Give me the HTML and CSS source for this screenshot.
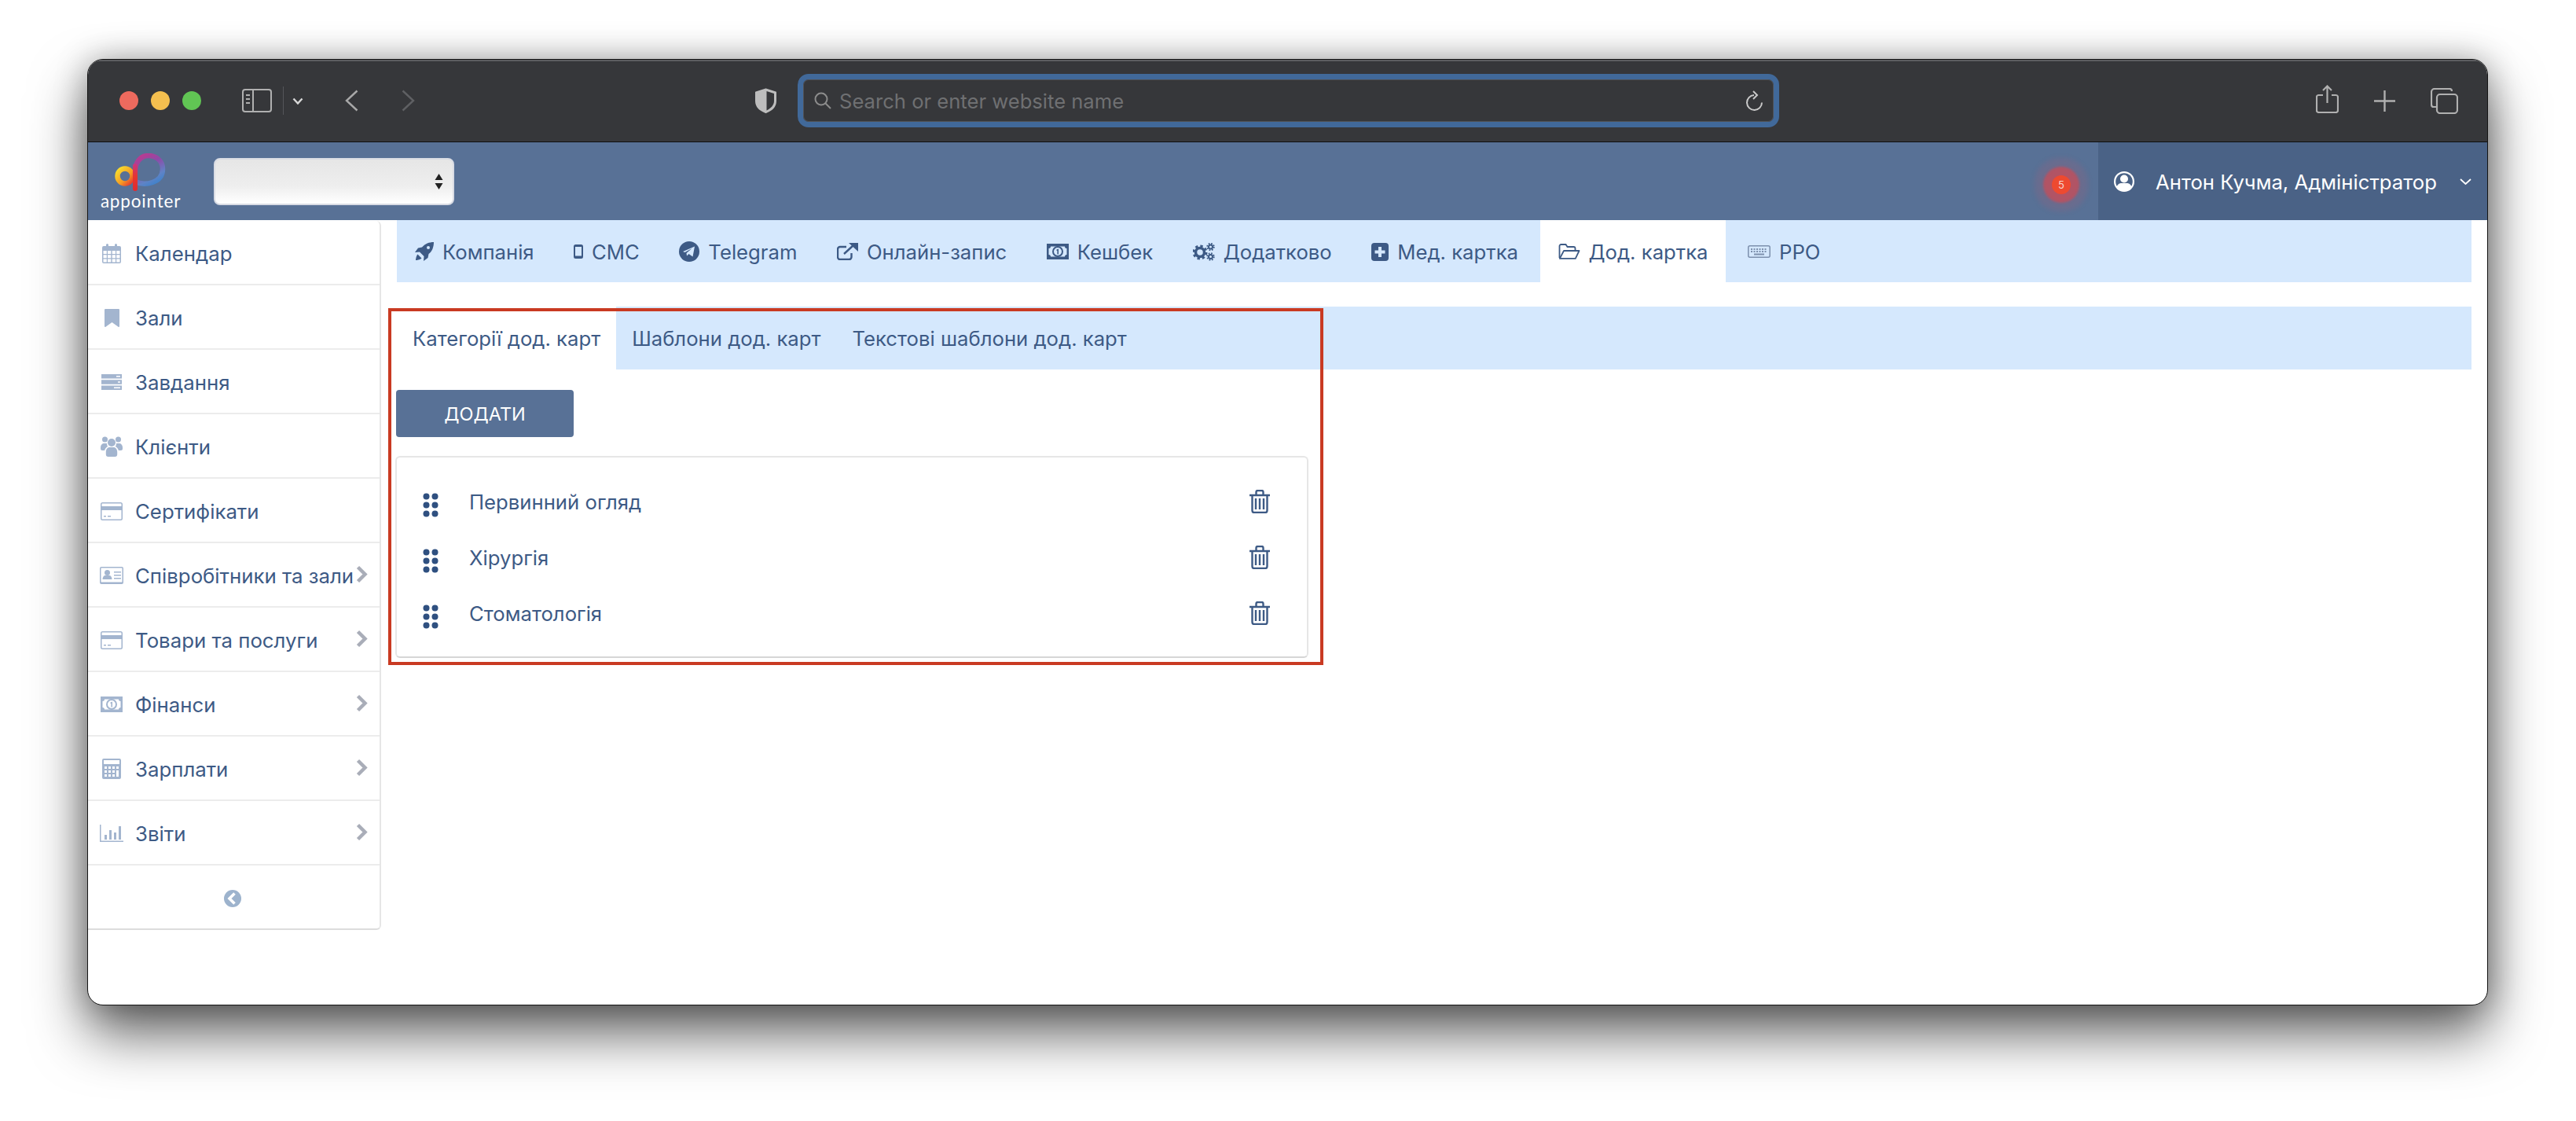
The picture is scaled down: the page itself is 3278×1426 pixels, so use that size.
FILE: index.html
```html
<!DOCTYPE html>
<html lang="uk">
<head>
<meta charset="utf-8">
<title>appointer</title>
<link rel="stylesheet" href="styles.css">
</head>
<body>
<svg class="defs" width="0" height="0" aria-hidden="true">
  <symbol id="i-card" viewBox="0 0 28 23"><path fill-rule="evenodd" d="M2.500 0h23A2.500 2.500 0 0 1 28 2.500v18a2.500 2.500 0 0 1-2.500 2.500h-23A2.500 2.500 0 0 1 0 20.500v-18A2.500 2.500 0 0 1 2.500 0zM1.500 10v10.500c0 .6.400 1 1 1h23c.6 0 1-.4 1-1V10zM1.500 2.500V5h25V2.500c0-.6-.4-1-1-1h-23c-.6 0-1 .4-1 1zM4 17h3v1.500H4zM9 17h4v1.500H9z"/></symbol>
  <symbol id="i-money" viewBox="0 0 28 20"><path fill-rule="evenodd" d="M0 0h28v20H0zM5 3.500Q5 6 2.500 6v8Q5 14 5 16.500h18Q23 14 25.500 14V6Q23 6 23 3.500z"/><circle cx="14" cy="10" r="6" fill="none" stroke="currentColor" stroke-width="2"/><path d="M12.500 7.500l2.500-1v7h-1.600V8.800l-.9.300z"/></symbol>
  <symbol id="i-chev" viewBox="0 0 15 23"><path fill="none" stroke="currentColor" stroke-width="4.500" d="M2.500 2.500l9 9-9 9"/></symbol>
  <symbol id="i-grip" viewBox="0 0 20 31"><circle cx="4.500" cy="4.500" r="4"/><circle cx="15.500" cy="4.500" r="4"/><circle cx="4.500" cy="15.500" r="4"/><circle cx="15.500" cy="15.500" r="4"/><circle cx="4.500" cy="26.500" r="4"/><circle cx="15.500" cy="26.500" r="4"/></symbol>
  <symbol id="i-trash" viewBox="0 0 26 30"><path fill="none" stroke="currentColor" stroke-width="2.400" d="M0 7h26M8.500 7V3a2 2 0 0 1 2-2h5a2 2 0 0 1 2 2v4M3.500 7v19.500a2.500 2.500 0 0 0 2.500 2.500h14a2.500 2.500 0 0 0 2.500-2.500V7M8 11v14M13 11v14M18 11v14"/></symbol>
</svg>
<div class="window">
  <header class="toolbar">
    <span class="dot dot-red"></span><span class="dot dot-yellow"></span><span class="dot dot-green"></span>
    <svg class="tb-sidebar" viewBox="0 0 38 30" fill="none" stroke="#b0b0b0" stroke-width="2"><rect x="1" y="1" width="36" height="28" rx="3"/><path d="M14 1v28M5 8h5M5 13h5M5 18h5"/></svg>
    <span class="tb-sep"></span>
    <svg class="tb-down" viewBox="0 0 14 9" fill="none" stroke="#d8d8d8" stroke-width="2.400"><path d="M1.500 1.500L7 7.500l5.500-6"/></svg>
    <svg class="tb-back" viewBox="0 0 17 28" fill="none" stroke="#a8a8a8" stroke-width="2.400"><path d="M15.500 1.500L2 14l13.500 12.500"/></svg>
    <svg class="tb-forward" viewBox="0 0 17 28" fill="none" stroke="#5f6063" stroke-width="2.400"><path d="M1.500 1.500L15 14 1.500 26.500"/></svg>
    <svg class="tb-shield" viewBox="0 0 29 32"><path fill="#bdbdbd" stroke="#bdbdbd" stroke-width="2" stroke-linejoin="round" d="M14.500 1.500L2 5.500v11c0 7 6 12 12.500 14.500 6.500-2.500 12.500-7.500 12.500-14.500v-11z"/><path fill="#36373a" d="M15.500 4L25 7v9.500c0 5.500-4.500 9.500-9.500 12z"/></svg>
    <div class="urlbar">
      <svg class="url-search" viewBox="0 0 22 22" fill="none" stroke="#8c8c8c" stroke-width="2"><circle cx="9" cy="9" r="7.500"/><path d="M14.500 14.500l6.500 6.500"/></svg>
      <span class="url-text">Search or enter website name</span>
      <svg class="url-reload" viewBox="0 0 23 26" fill="none" stroke="#c9c9c9" stroke-width="2"><path d="M11 6a9.500 9.500 0 1 0 10 9.500"/><path d="M10 1l5 5-5 5"/></svg>
    </div>
    <svg class="tb-share" viewBox="0 0 29 36" fill="none" stroke="#b0b0b0" stroke-width="2.200"><path d="M9 13H3.500A2.500 2.500 0 0 0 1 15.500v17A2.500 2.500 0 0 0 3.500 35h22a2.500 2.500 0 0 0 2.500-2.500v-17a2.500 2.500 0 0 0-2.500-2.500H20M14.500 23V2M9 7l5.500-5.500L20 7"/></svg>
    <svg class="tb-plus" viewBox="0 0 27 27" fill="none" stroke="#b0b0b0" stroke-width="2.400"><path d="M13.500 0v27M0 13.500h27"/></svg>
    <svg class="tb-tabs" viewBox="0 0 35 33" fill="none" stroke="#b0b0b0" stroke-width="2.200"><path d="M27 4a3 3 0 0 0-3-3H5a4 4 0 0 0-4 4v16a3 3 0 0 0 3 3h3"/><rect x="8" y="8" width="26" height="24" rx="4"/></svg>
  </header>
  <div class="apphdr">
    <div class="logo">
      <svg class="logo-mark" viewBox="20 4 66 50" fill="none">
        <defs>
          <linearGradient id="lg1" x1="0" y1="0" x2="1" y2="1"><stop offset="0" stop-color="#f7e02e"/><stop offset=".6" stop-color="#f69a24"/><stop offset="1" stop-color="#e5352f"/></linearGradient>
          <linearGradient id="lg2" gradientUnits="userSpaceOnUse" x1="46" y1="6" x2="70" y2="48"><stop offset="0" stop-color="#c4378a"/><stop offset=".4" stop-color="#8d4aa8"/><stop offset=".75" stop-color="#5f83c6"/><stop offset="1" stop-color="#3582cc"/></linearGradient>
          <linearGradient id="lg3" gradientUnits="userSpaceOnUse" x1="46" y1="16" x2="46" y2="52"><stop offset="0" stop-color="#c4378a"/><stop offset=".5" stop-color="#e5352f"/><stop offset="1" stop-color="#e02a30"/></linearGradient>
        </defs>
        <path stroke="url(#lg2)" stroke-width="6.500" d="M46 40C58 46 81 42 81 24 81 13 72 7 63 7 52 7 46 16 46 28"/>
        <circle cx="33" cy="33" r="9.500" stroke="url(#lg1)" stroke-width="6.500"/>
        <path stroke="url(#lg3)" stroke-width="6" stroke-linecap="round" d="M46 20v29"/>
      </svg>
      <span class="logo-text">appointer</span>
    </div>
    <div class="select">
      <svg class="select-arrows" viewBox="0 0 11 20" fill="#222"><path d="M5.500 0l5 8H.5zM5.500 20l5-8H.5z"/></svg>
    </div>
    <div class="badge"><span class="badge-core">5</span></div>
    <div class="user">
      <svg class="user-icon" viewBox="0 0 26 26"><circle cx="13" cy="13" r="13" fill="#fff"/><circle cx="13" cy="13" r="10.800" fill="#4a6286"/><circle cx="13" cy="9.500" r="5" fill="#fff"/><path fill="#fff" d="M3.500 20c1-4 4-5 6-5h7c2 0 5 1 6 5-2 3.500-6 5-9.500 5s-7.500-1.500-9.500-5z"/></svg>
      <span class="user-name">Антон Кучма, Адміністратор</span>
      <svg class="user-caret" viewBox="0 0 15 8" fill="none" stroke="#fff" stroke-width="1.800"><path d="M1 1l6.500 6L14 1"/></svg>
    </div>
  </div>
  <div class="main">
    <nav class="sidebar">
      <a class="side-row">
        <span class="side-ico"><svg class="s-cal" viewBox="0 0 24 25" fill="currentColor"><path fill-rule="evenodd" d="M2 3h3V1.500a1.500 1.500 0 0 1 3 0V3h8V1.500a1.500 1.500 0 0 1 3 0V3h3a2 2 0 0 1 2 2v18a2 2 0 0 1-2 2H2a2 2 0 0 1-2-2V5a2 2 0 0 1 2-2zM1.500 9v4h4.300V9zM7 9v4h4.300V9zM12.700 9v4H17V9zM18.200 9v4h4.300V9zM1.500 14.200v4h4.300v-4zM7 14.200v4h4.300v-4zM12.700 14.200v4H17v-4zM18.200 14.200v4h4.300v-4zM1.500 19.400v4h4.300v-4zM7 19.400v4h4.300v-4zM12.700 19.400v4H17v-4zM18.200 19.400v4h4.300v-4z"/></svg></span>
        <span class="side-label">Календар</span>
      </a>
      <a class="side-row">
        <span class="side-ico"><svg class="s-book" viewBox="0 0 19 23" fill="currentColor"><path d="M0 1a1 1 0 0 1 1-1h17a1 1 0 0 1 1 1v21a1 1 0 0 1-1.500.7L9.500 17l-8 5.700A1 1 0 0 1 0 22z"/></svg></span>
        <span class="side-label">Зали</span>
      </a>
      <a class="side-row">
        <span class="side-ico"><svg class="s-task" viewBox="0 0 26 20" fill="currentColor"><path fill-rule="evenodd" d="M0 0h26v5.500H0zM19 2v1.500h5V2zM0 7.300h26v5.400H0zM21 9.200v1.500h3V9.200zM0 14.500h26V20H0zM16 16.500V18h8v-1.500z"/></svg></span>
        <span class="side-label">Завдання</span>
      </a>
      <a class="side-row">
        <span class="side-ico"><svg class="s-users" viewBox="0 0 28 26" fill="currentColor"><circle cx="5.500" cy="4" r="3.500"/><circle cx="22.500" cy="4" r="3.500"/><circle cx="14" cy="8" r="5"/><path d="M0 14c0-3 2-5 4.500-5H8a7 7 0 0 0 1 4c-2 1-3.500 3-3.800 5H2c-1 0-2-1-2-2zM28 14c0-3-2-5-4.500-5H20a7 7 0 0 1-1 4c2 1 3.500 3 3.800 5H26c1 0 2-1 2-2zM6.800 20c0-4 2.500-6 4.500-6h5.400c2 0 4.500 2 4.500 6v3a3 3 0 0 1-3 3h-8.400a3 3 0 0 1-3-3z"/></svg></span>
        <span class="side-label">Клієнти</span>
      </a>
      <a class="side-row">
        <span class="side-ico"><svg class="s-card" fill="currentColor"><use href="#i-card"/></svg></span>
        <span class="side-label">Сертифікати</span>
      </a>
      <a class="side-row">
        <span class="side-ico"><svg class="s-id" viewBox="0 0 30 22" fill="currentColor"><path fill-rule="evenodd" d="M2 0h26a2 2 0 0 1 2 2v18a2 2 0 0 1-2 2H2a2 2 0 0 1-2-2V2a2 2 0 0 1 2-2zM2 1.500c-.3 0-.5.200-.5.500v17c0 .3.200.5.500.5h26c.3 0 .5-.2.500-.5V2c0-.3-.2-.5-.5-.5z"/><circle cx="9.500" cy="7.500" r="3.500"/><path d="M3.500 16c0-3 1.500-5 3.500-5h5c2 0 3.500 2 3.500 5zM18 6h9v1.500h-9zM18 10h9v1.500h-9zM18 14h9v1.500h-9z"/></svg></span>
        <span class="side-label">Співробітники та зали</span>
        <svg class="side-chev"><use href="#i-chev"/></svg>
      </a>
      <a class="side-row">
        <span class="side-ico"><svg class="s-card" fill="currentColor"><use href="#i-card"/></svg></span>
        <span class="side-label">Товари та послуги</span>
        <svg class="side-chev"><use href="#i-chev"/></svg>
      </a>
      <a class="side-row">
        <span class="side-ico"><svg class="s-money" fill="currentColor"><use href="#i-money"/></svg></span>
        <span class="side-label">Фінанси</span>
        <svg class="side-chev"><use href="#i-chev"/></svg>
      </a>
      <a class="side-row">
        <span class="side-ico"><svg class="s-calc" viewBox="0 0 24 26" fill="currentColor"><path fill-rule="evenodd" d="M2 0h20a2 2 0 0 1 2 2v22a2 2 0 0 1-2 2H2a2 2 0 0 1-2-2V2a2 2 0 0 1 2-2zM2 2v5h20V2zM3 10v3h3v-3zM8 10v3h3v-3zM13 10v3h3v-3zM18 10v3h3v-3zM3 15v3h3v-3zM8 15v3h3v-3zM13 15v3h3v-3zM18 15v8h3v-8zM3 20v3h3v-3zM8 20v3h3v-3zM13 20v3h3v-3z"/></svg></span>
        <span class="side-label">Зарплати</span>
        <svg class="side-chev"><use href="#i-chev"/></svg>
      </a>
      <a class="side-row">
        <span class="side-ico"><svg class="s-chart" viewBox="0 0 30 22" fill="currentColor"><path d="M0 0h1.500v20.500H30V22H0zM6 13h3v6H6zM12 7h3v12h-3zM18 10h3v9h-3zM24 2h3v17h-3z"/></svg></span>
        <span class="side-label">Звіти</span>
        <svg class="side-chev"><use href="#i-chev"/></svg>
      </a>
      <div class="side-collapse">
        <svg class="collapse-ico" viewBox="0 0 22 22"><circle cx="11" cy="11" r="11" fill="#9db3cd"/><path fill="none" stroke="#fff" stroke-width="3.600" d="M13.500 4.500L7 11l6.500 6.500"/></svg>
      </div>
    </nav>
    <section class="content">
      <div class="tabs">
        <a class="tab"><svg class="t-rocket" viewBox="0 0 24 24" fill="currentColor"><path fill-rule="evenodd" d="M24 0c-6 0-11 2-15 6.500L4 7.500 0 13l6-.5 5.500 5.500-.5 6 5.500-4 1-5C22 12 24 6 24 0zM17 5a2 2 0 1 1 0 4 2 2 0 0 1 0-4z"/><path d="M3.500 15.500C1.500 17.500 1 22 1 23c1 0 5.500-.5 7.500-2.500z"/></svg>Компанія</a>
        <a class="tab"><svg class="t-phone" viewBox="0 0 12 18" fill="currentColor"><path fill-rule="evenodd" d="M2.500 0h7A2.500 2.500 0 0 1 12 2.500v13A2.500 2.500 0 0 1 9.500 18h-7A2.500 2.500 0 0 1 0 15.500v-13A2.500 2.500 0 0 1 2.500 0zM2 3v11.500h8V3z"/></svg>СМС</a>
        <a class="tab"><svg class="t-tg" viewBox="0 0 26 26"><circle cx="13" cy="13" r="13" fill="currentColor"/><path fill="#d5e8fd" d="M5 13l15-6.500-2.500 13-5-3.500-2.500 2.500-.5-3.500 7-6-9 5z"/></svg>Telegram</a>
        <a class="tab"><svg class="t-ext" viewBox="0 0 27 22" fill="none" stroke="currentColor" stroke-width="2.400"><path d="M18.500 13v5a3 3 0 0 1-3 3H4a3 3 0 0 1-3-3V8a3 3 0 0 1 3-3h8M9 14L21 3"/><path fill="currentColor" stroke="none" d="M15 0h12v11z"/></svg>Онлайн-запис</a>
        <a class="tab"><svg class="t-money" fill="currentColor"><use href="#i-money"/></svg>Кешбек</a>
        <a class="tab"><svg class="t-gears" viewBox="0 0 28 23" fill="none" stroke="currentColor"><circle cx="9" cy="12" r="5.500" stroke-width="3.500"/><circle cx="9" cy="12" r="8" stroke-width="3" stroke-dasharray="3.300 3"/><circle cx="22.500" cy="5" r="2.500" stroke-width="2"/><circle cx="22.500" cy="5" r="4.300" stroke-width="1.800" stroke-dasharray="1.700 1.700"/><circle cx="22.500" cy="17.500" r="2.500" stroke-width="2"/><circle cx="22.500" cy="17.500" r="4.300" stroke-width="1.800" stroke-dasharray="1.700 1.700"/></svg>Додатково</a>
        <a class="tab"><svg class="t-plus" viewBox="0 0 22 23"><rect width="22" height="23" rx="4" fill="currentColor"/><path fill="#d5e8fd" d="M9 5h4v4.500h4.500v4H13V18H9v-4.500H4.500v-4H9z"/></svg>Мед. картка</a>
        <a class="tab tab-active"><svg class="t-folder" viewBox="0 0 28 20" fill="none" stroke="currentColor" stroke-width="1.800"><path d="M1.500 18V3a2 2 0 0 1 2-2h6l2 3h8a2 2 0 0 1 2 2v2.500"/><path d="M1.800 18.800L7 9h19.500l-4.700 9.800z" stroke-linejoin="round"/></svg>Дод. картка</a>
        <a class="tab"><svg class="t-kbd" viewBox="0 0 29 16" fill="none" stroke="#7d90ad" stroke-width="1.500"><rect x=".8" y=".8" width="27.400" height="14.400" rx="2"/><path d="M4 5h21M4 8h21" stroke-width="2" stroke-dasharray="2 1.500"/><path d="M8 11.500h13" stroke-width="2"/></svg>РРО</a>
      </div>
      <div class="panel">
        <div class="subtabs">
          <a class="subtab subtab-active">Категорії дод. карт</a>
          <a class="subtab">Шаблони дод. карт</a>
          <a class="subtab">Текстові шаблони дод. карт</a>
        </div>
        <button class="add-btn">ДОДАТИ</button>
        <div class="card">
          <div class="item">
            <svg class="grip" fill="currentColor"><use href="#i-grip"/></svg>
            <span class="item-label">Первинний огляд</span>
            <svg class="trash"><use href="#i-trash"/></svg>
          </div>
          <div class="item">
            <svg class="grip" fill="currentColor"><use href="#i-grip"/></svg>
            <span class="item-label">Хірургія</span>
            <svg class="trash"><use href="#i-trash"/></svg>
          </div>
          <div class="item">
            <svg class="grip" fill="currentColor"><use href="#i-grip"/></svg>
            <span class="item-label">Стоматологія</span>
            <svg class="trash"><use href="#i-trash"/></svg>
          </div>
        </div>
        <div class="highlight"></div>
      </div>
    </section>
  </div>
</div>
</body>
</html>
```
FILE: styles.css
```css
* { box-sizing: border-box; }
html, body { margin: 0; height: 100%; }
body {
  width: 3278px;
  height: 1426px;
  background: #fff;
  padding: 75px 0 0 111px;
  overflow: hidden;
  font-family: "Inter", "Liberation Sans", sans-serif;
  color: #3d5a85;
}
.defs { position: absolute; }
a { color: inherit; text-decoration: none; }
svg { display: block; flex: none; }

.window {
  width: 3055px;
  height: 1204px;
  border: 1px solid #141414;
  border-radius: 20px;
  background: #fff;
  overflow: hidden;
  display: flex;
  flex-direction: column;
  box-shadow: 0 36px 70px rgba(0, 0, 0, .62), 0 0 40px rgba(0, 0, 0, .28);
}

.toolbar {
  height: 105px;
  flex: none;
  display: flex;
  align-items: center;
  background: #36373a;
  border-bottom: 1px solid #0e0e0e;
  box-shadow: inset 0 2px 0 #5c5d60;
  padding-left: 40px;
}
.dot { width: 24px; height: 24px; border-radius: 50%; margin-right: 16px; }
.dot-red { background: #ed6a5e; }
.dot-yellow { background: #f4bf4f; }
.dot-green { background: #61c554; }
.tb-sidebar { width: 38px; height: 30px; margin-left: 36px; }
.tb-sep { width: 1px; height: 36px; background: #55565a; margin-left: 14px; }
.tb-down { width: 14px; height: 9px; margin-left: 11px; }
.tb-back { width: 17px; height: 28px; margin-left: 53px; }
.tb-forward { width: 17px; height: 28px; margin-left: 55px; }
.tb-shield { width: 29px; height: 32px; margin-left: 432px; }
.urlbar {
  width: 1249px;
  height: 68px;
  margin-left: 26px;
  border: 7px solid #41699a;
  border-radius: 14px;
  background: #36373a;
  display: flex;
  align-items: center;
  padding: 0 13px 0 14px;
  box-shadow: inset 0 0 0 1px #505154;
}
.url-search { width: 22px; height: 22px; }
.url-text { margin-left: 10px; font-size: 25.6px; color: #6f7072; }
.url-reload { width: 23px; height: 26px; margin-left: auto; }
.tb-share { width: 29px; height: 36px; margin-left: 683px; margin-top: -4px; }
.tb-plus { width: 27px; height: 27px; margin-left: 45px; }
.tb-tabs { width: 35px; height: 33px; margin-left: 45px; }

.apphdr {
  height: 99px;
  flex: none;
  display: flex;
  align-items: center;
  background: #587196;
}
.logo {
  width: 98px;
  margin-left: 18px;
  display: flex;
  flex-direction: column;
  align-items: center;
}
.logo-mark { width: 66px; height: 50px; }
.logo-text {
  color: #fff;
  font-family: "Lato", sans-serif;
  font-size: 22.5px;
  line-height: 22px;
  letter-spacing: .8px;
  font-weight: 400;
}
.select {
  width: 306px;
  height: 60px;
  margin-left: 44px;
  border: 2px solid #d9dce4;
  border-radius: 8px;
  background: linear-gradient(#e6e6e6, #eeeeee 60%, #fff);
  display: flex;
  align-items: center;
  justify-content: flex-end;
  padding-right: 12px;
}
.select-arrows { width: 11px; height: 20px; }
.badge {
  margin-left: auto;
  margin-right: 35px;
  margin-top: 9px;
  width: 24px;
  height: 24px;
  border-radius: 50%;
  background: #ee4a30;
  box-shadow: 0 0 3px 11px rgba(208, 74, 82, .7), 0 0 6px 22px rgba(190, 90, 110, .18);
}
.badge-core {
  display: block;
  text-align: center;
  color: #f5d5cf;
  font-size: 13px;
  line-height: 24px;
}
.user {
  width: 495px;
  height: 100%;
  background: #4a6286;
  display: flex;
  align-items: center;
  padding: 1px 0 0 20px;
  color: #fff;
}
.user-icon { width: 26px; height: 26px; }
.user-name { margin-left: 27px; font-size: 25.7px; white-space: nowrap; }
.user-caret { width: 15px; height: 8px; margin-left: 29px; }

.main { flex: 1; display: flex; min-height: 0; align-items: flex-start; }
.sidebar {
  width: 373px;
  flex: none;
  margin-top: 1px;
  background: #fff;
  border-right: 2px solid #e6e6e6;
  border-bottom: 2px solid #dcdcdc;
  border-radius: 0 6px 6px 0;
}
.side-row {
  height: 82px;
  display: flex;
  align-items: center;
  border-bottom: 2px solid #ececec;
  padding: 2px 15px 0 0;
  color: #3d5a85;
}
.side-ico {
  width: 60px;
  display: flex;
  justify-content: center;
  color: #a3b5cf;
  flex: none;
}
.side-label { font-size: 25.8px; white-space: nowrap; }
.side-chev { width: 15px; height: 23px; margin-left: auto; margin-top: -3px; color: #a9adb8; }
.side-collapse {
  height: 80px;
  display: flex;
  align-items: center;
  justify-content: center;
  padding: 3px 3px 0 0;
}
.collapse-ico { width: 22px; height: 22px; }
.s-cal { width: 24px; height: 25px; }
.s-book { width: 19px; height: 23px; }
.s-task { width: 26px; height: 20px; }
.s-users { width: 28px; height: 26px; }
.s-card { width: 28px; height: 23px; }
.s-id { width: 30px; height: 22px; }
.s-money { width: 28px; height: 20px; }
.s-calc { width: 24px; height: 26px; }
.s-chart { width: 30px; height: 22px; }

.content { flex: 1; padding: 0 20px; min-width: 0; }
.tabs {
  height: 79px;
  background: #d5e8fd;
  display: flex;
  font-size: 25.7px;
}
.tab {
  display: flex;
  align-items: center;
  padding: 1px 22px 0 23px;
  margin-right: 5.5px;
  gap: 11px;
  white-space: nowrap;
}
.tab-active { background: #fff; }
.t-rocket { width: 24px; height: 24px; }
.t-phone { width: 12px; height: 18px; }
.t-tg { width: 26px; height: 26px; }
.t-ext { width: 27px; height: 22px; }
.t-money { width: 28px; height: 20px; }
.t-gears { width: 28px; height: 23px; }
.t-plus { width: 22px; height: 23px; }
.t-folder { width: 28px; height: 20px; }
.t-kbd { width: 29px; height: 16px; }

.panel { position: relative; margin-top: 31px; }
.subtabs {
  height: 80px;
  background: #d5e8fd;
  display: flex;
  font-size: 25.7px;
}
.subtab {
  display: flex;
  align-items: center;
  padding: 0 20px;
  white-space: nowrap;
}
.subtab-active { background: #fff; }
.add-btn {
  display: block;
  width: 226px;
  height: 60px;
  margin: 26px 0 0 -1px;
  border: 0;
  border-radius: 4px;
  background: #587196;
  color: #fff;
  font: 23.5px "Inter", sans-serif;
}
.card {
  width: 1162px;
  height: 257px;
  margin: 24px 0 0 -2px;
  border: 2px solid #e6e6e6;
  border-bottom-color: #d6d6d6;
  border-radius: 6px;
  background: #fff;
  padding-top: 21px;
}
.item {
  height: 71px;
  display: flex;
  align-items: center;
  padding: 0 47px 0 33px;
  font-size: 25.7px;
}
.grip { width: 20px; height: 31px; margin-top: 7px; color: #2f5080; }
.item-label { margin-left: 39px; }
.trash { width: 26px; height: 30px; margin-left: auto; margin-top: -2px; }
.highlight {
  position: absolute;
  left: -11px;
  top: 2px;
  width: 1190px;
  height: 454px;
  border: 4px solid #c93a22;
  pointer-events: none;
}
```
